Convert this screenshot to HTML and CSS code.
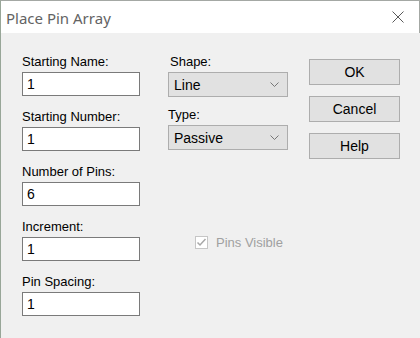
FILE: index.html
```html
<!DOCTYPE html>
<html lang="en">
<head>
    <meta charset="UTF-8" />
    <meta name="viewport" content="width=device-width, initial-scale=1.0" />
    <title>Place Pin Array</title>
    <link rel="stylesheet" href="styles.css">
</head>
<body>
    <div class="window">
        <div class="title-bar">
            <span class="title">Place Pin Array</span>
            <svg class="close" width="12" height="12" viewBox="0 0 12 12">
                <path d="M0.5 0.5 L11.5 11.5 M11.5 0.5 L0.5 11.5" stroke="#5a5a5a" stroke-width="1" fill="none" />
            </svg>
        </div>
        <div class="content">
            <div class="col-left">
                <div class="field">
                    <label for="startName">Starting Name:</label>
                    <input type="text" id="startName" value="1" />
                </div>
                <div class="field">
                    <label for="startNumber">Starting Number:</label>
                    <input type="text" id="startNumber" value="1" />
                </div>
                <div class="field">
                    <label for="pinCount">Number of Pins:</label>
                    <input type="text" id="pinCount" value="6" />
                </div>
                <div class="field">
                    <label for="increment">Increment:</label>
                    <input type="text" id="increment" value="1" />
                </div>
                <div class="field">
                    <label for="spacing">Pin Spacing:</label>
                    <input type="text" id="spacing" value="1" />
                </div>
            </div>

            <div class="col-mid">
                <div class="field">
                    <label class="shape-label">Shape:</label>
                    <div class="combo">
                        <span>Line</span>
                        <svg width="9" height="5" viewBox="0 0 9 5">
                            <polyline points="0.5,0.5 4.5,4.5 8.5,0.5" stroke="#777" stroke-width="1" fill="none" />
                        </svg>
                    </div>
                </div>
                <div class="field">
                    <label class="type-label">Type:</label>
                    <div class="combo">
                        <span>Passive</span>
                        <svg width="9" height="5" viewBox="0 0 9 5">
                            <polyline points="0.5,0.5 4.5,4.5 8.5,0.5" stroke="#777" stroke-width="1" fill="none" />
                        </svg>
                    </div>
                </div>
                <div class="check">
                    <span class="check-box">
                        <svg width="11" height="11" viewBox="0 0 11 11">
                            <polyline points="1.5,5.5 4,8 9.5,2" stroke="#a8a8a8" stroke-width="1.5" fill="none" />
                        </svg>
                    </span>
                    <span class="check-label">Pins Visible</span>
                </div>
            </div>

            <div class="col-buttons">
                <button>OK</button>
                <button>Cancel</button>
                <button>Help</button>
            </div>
        </div>
    </div>
</body>
</html>
```

FILE: styles.css
```css
body {
    margin: 0;
    font-family: "Liberation Sans", Arial, sans-serif;
    font-size: 13px;
    color: #000;
    background: #f0f0f0;
}
.window {
    height: 338px;
    box-sizing: border-box;
    border-left: 1px solid #98a698;
    border-top: 1px solid #a4a8a4;
    background: #f0f0f0;
}
.title-bar {
    height: 32px;
    background: #ffffff;
    border-right: 1px solid #a4a8a4;
    display: flex;
    align-items: center;
    justify-content: space-between;
    padding: 0 15px 0 5px;
}
.title {
    font-family: "Noto Sans", "Open Sans", sans-serif;
    font-size: 15px;
    color: #636363;
    margin-top: 1px;
}
.close {
    display: block;
}
.content {
    display: flex;
    padding-top: 21px;
}
.col-left {
    margin-left: 21px;
    width: 118px;
}
.field label {
    display: block;
    line-height: 16px;
    margin-bottom: 2px;
}
.field input {
    display: block;
    width: 100%;
    height: 24px;
    box-sizing: border-box;
    border: 1px solid #7a7a7a;
    background: #fff;
    padding: 0 4px;
    font-family: inherit;
    font-size: 14px;
    margin: 0;
}
.col-left .field + .field {
    margin-top: 13px;
}
.col-mid {
    margin-left: 28px;
    width: 120px;
}
.shape-label {
    padding-left: 2px;
}
.col-mid .field + .field {
    margin-top: 10px;
}
.combo {
    height: 25px;
    box-sizing: border-box;
    border: 1px solid #adadad;
    background: #e1e1e1;
    display: flex;
    align-items: center;
    justify-content: space-between;
    padding: 0 8px 0 5px;
    font-size: 14px;
}
.check {
    display: flex;
    align-items: center;
    margin-top: 85px;
    margin-left: 27px;
    color: #a0a0a0;
}
.check-box {
    width: 13px;
    height: 13px;
    box-sizing: border-box;
    border: 1px solid #c6c6c6;
    background: #fff;
    display: flex;
    align-items: center;
    justify-content: center;
    margin-right: 8px;
}
.check-box svg {
    display: block;
}
.col-buttons {
    margin-left: 21px;
    margin-top: 5px;
    width: 91px;
    display: flex;
    flex-direction: column;
    gap: 11px;
}
.col-buttons button {
    height: 26px;
    border: 1px solid #adadad;
    background: #e1e1e1;
    font-family: inherit;
    font-size: 14px;
    color: #000;
    padding: 0;
    margin: 0;
}
```
